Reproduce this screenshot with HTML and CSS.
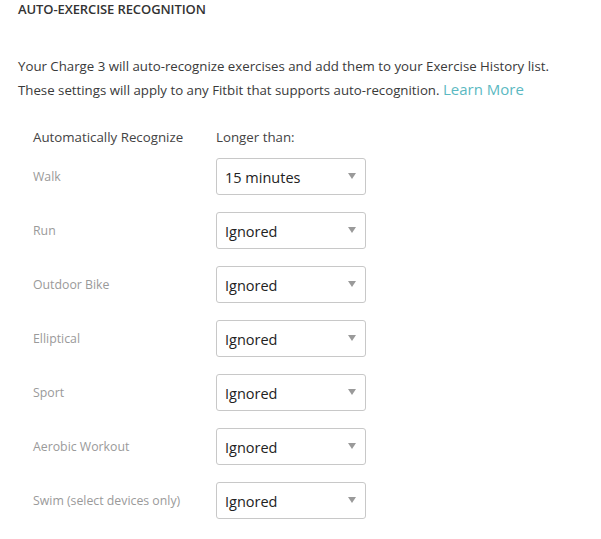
FILE: index.html
```html
<!DOCTYPE html>
<html>
<head>
<meta charset="utf-8">
<link rel="stylesheet" href="styles.css">
</head>
<body>
<div class="page">
  <h2 class="title">AUTO-EXERCISE RECOGNITION</h2>
  <p class="intro">Your Charge 3 will auto-recognize exercises and add them to your Exercise History list.<br>These settings will apply to any Fitbit that supports auto-recognition. <a class="learn" href="#">Learn More</a></p>
  <div class="table">
    <div class="head">Automatically Recognize</div>
    <div class="head">Longer than:</div>
    <div class="label">Walk</div>
    <div class="select"><span>15 minutes</span><i class="arrow"></i></div>
    <div class="label">Run</div>
    <div class="select"><span>Ignored</span><i class="arrow"></i></div>
    <div class="label">Outdoor Bike</div>
    <div class="select"><span>Ignored</span><i class="arrow"></i></div>
    <div class="label">Elliptical</div>
    <div class="select"><span>Ignored</span><i class="arrow"></i></div>
    <div class="label">Sport</div>
    <div class="select"><span>Ignored</span><i class="arrow"></i></div>
    <div class="label">Aerobic Workout</div>
    <div class="select"><span>Ignored</span><i class="arrow"></i></div>
    <div class="label">Swim (select devices only)</div>
    <div class="select"><span>Ignored</span><i class="arrow"></i></div>
  </div>
</div>
</body>
</html>
```
FILE: styles.css
```css
html, body { margin: 0; padding: 0; background: #fff; }
body { font-family: "Open Sans", "Liberation Sans", sans-serif; color: #333; }
.page { padding: 0 0 0 18px; }
.title {
  margin: 0;
  padding-top: 1px;
  font-size: 13px;
  font-weight: 600;
  color: #333;
  line-height: 16px;
  letter-spacing: -0.1px;
}
.intro {
  margin: 38px 0 0 0;
  font-size: 13.25px;
  line-height: 23px;
  color: #3a3a3a;
}
.learn { color: #5bb9c2; text-decoration: none; font-size: 15px; }
.table {
  margin: 27px 0 0 15px;
  display: grid;
  grid-template-columns: 183px 150px;
  row-gap: 17px;
  align-items: center;
}
.head { font-size: 13.3px; color: #444; line-height: 17px; margin-bottom: -5px; }
.label { font-size: 12.3px; color: #9a9a9a; }
.select {
  position: relative;
  height: 37px;
  box-sizing: border-box;
  border: 1px solid #c8c8c8;
  border-radius: 3px;
  display: flex;
  align-items: center;
  padding: 2px 0 0 8px;
  font-size: 14.5px;
  color: #222;
}
.arrow {
  position: absolute;
  right: 9px;
  top: 14px;
  width: 0; height: 0;
  border-left: 4px solid transparent;
  border-right: 4px solid transparent;
  border-top: 6px solid #9a9a9a;
}
```
